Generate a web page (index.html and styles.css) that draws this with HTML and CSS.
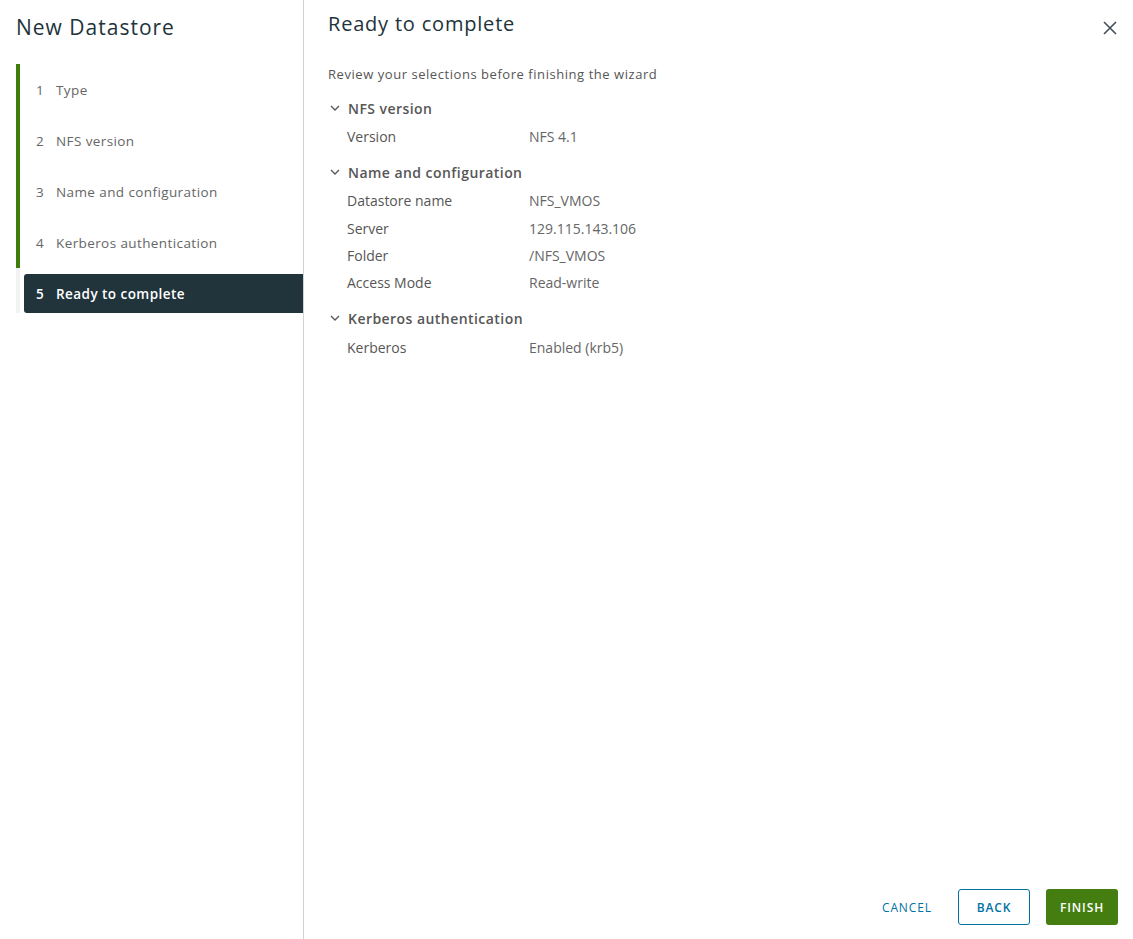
FILE: index.html
```html
<!DOCTYPE html>
<html>
<head>
<meta charset="utf-8">
<link rel="stylesheet" href="styles.css">
</head>
<body>
<div class="wizard">
  <aside class="sidebar">
    <h1 class="wiz-title">New Datastore</h1>
    <ol class="steps">
      <li class="step done"><span class="num">1</span><span>Type</span></li>
      <li class="step done"><span class="num">2</span><span>NFS version</span></li>
      <li class="step done"><span class="num">3</span><span>Name and configuration</span></li>
      <li class="step done"><span class="num">4</span><span>Kerberos authentication</span></li>
      <li class="step current"><span class="num">5</span><span>Ready to complete</span></li>
    </ol>
  </aside>
  <main class="content">
    <header class="content-head">
      <h2 class="page-title">Ready to complete</h2>
      <button class="close" aria-label="Close">
        <svg width="14" height="14" viewBox="0 0 14 14"><path d="M1 1 L13 13 M13 1 L1 13" stroke="#444f57" stroke-width="1.6" fill="none"/></svg>
      </button>
    </header>
    <p class="intro">Review your selections before finishing the wizard</p>
    <section class="group">
      <div class="group-head"><svg class="chev" width="10" height="10" viewBox="0 0 10 10"><path d="M1 3 L5 7 L9 3" stroke="#565656" stroke-width="1.3" fill="none"/></svg>NFS version</div>
      <div class="row"><span class="lbl">Version</span><span class="val">NFS 4.1</span></div>
    </section>
    <section class="group">
      <div class="group-head"><svg class="chev" width="10" height="10" viewBox="0 0 10 10"><path d="M1 3 L5 7 L9 3" stroke="#565656" stroke-width="1.3" fill="none"/></svg>Name and configuration</div>
      <div class="row"><span class="lbl">Datastore name</span><span class="val">NFS_VMOS</span></div>
      <div class="row"><span class="lbl">Server</span><span class="val">129.115.143.106</span></div>
      <div class="row"><span class="lbl">Folder</span><span class="val">/NFS_VMOS</span></div>
      <div class="row"><span class="lbl">Access Mode</span><span class="val">Read-write</span></div>
    </section>
    <section class="group">
      <div class="group-head"><svg class="chev" width="10" height="10" viewBox="0 0 10 10"><path d="M1 3 L5 7 L9 3" stroke="#565656" stroke-width="1.3" fill="none"/></svg>Kerberos authentication</div>
      <div class="row"><span class="lbl">Kerberos</span><span class="val">Enabled (krb5)</span></div>
    </section>
    <footer class="actions">
      <button class="btn btn-link">CANCEL</button>
      <button class="btn btn-outline">BACK</button>
      <button class="btn btn-success">FINISH</button>
    </footer>
  </main>
</div>
</body>
</html>
```

FILE: styles.css
```css
* { box-sizing: border-box; }
html, body { margin: 0; padding: 0; background: #fff; }
body { font-family: "Open Sans", Lato, Arial, sans-serif; color: #565656; }
.wizard { display: flex; height: 939px; width: 1133px; }
.sidebar {
  width: 304px;
  border-right: 1px solid #cbd4d8;
  flex: none;
}
.wiz-title {
  margin: 13px 0 0 16px;
  font-size: 21px;
  font-weight: 400;
  color: #21333b;
  line-height: 28px;
  letter-spacing: 1px;
}
.steps {
  list-style: none;
  margin: 23px 0 0 16px;
  padding: 0;
  border-left: 4px solid #f1f3f4;
}
.step {
  display: flex;
  align-items: center;
  height: 51px;
  font-size: 13.5px;
  color: #666;
  padding-left: 16px;
  margin-left: -4px;
  letter-spacing: 0.4px;
}
.step.done { border-left: 4px solid #3d7e0b; }
.step .num { width: 20px; }
.step.current {
  height: 39px;
  margin: 6px 0 5px 4px;
  padding-left: 12px;
  background: #21333b;
  color: #fff;
  font-weight: 600;
  border-radius: 3px 0 0 3px;
  letter-spacing: 0.45px;
}
.content {
  flex: 1;
  display: flex;
  flex-direction: column;
  padding: 0 15px 14px 24px;
}
.content-head {
  display: flex;
  justify-content: space-between;
  align-items: center;
  height: 48px;
}
.page-title {
  margin: -2px 0 0 0;
  font-size: 20px;
  font-weight: 400;
  color: #21333b;
  letter-spacing: 0.8px;
}
.close {
  border: 0;
  background: none;
  padding: 0;
  margin-top: 8px;
  margin-right: -2px;
  width: 20px;
  height: 20px;
  display: flex;
  align-items: center;
  justify-content: center;
}
.intro {
  margin: 17px 0 0 0;
  font-size: 13px;
  color: #565656;
  line-height: 18px;
  letter-spacing: 0.55px;
}
.group { margin-top: 15px; }
.group + .group { margin-top: 12px; }
.group-head {
  display: flex;
  align-items: center;
  height: 20px;
  font-size: 14px;
  font-weight: 600;
  color: #565656;
  padding-left: 2px;
  letter-spacing: 0.45px;
}
.chev { margin-right: 8px; }
.row {
  display: flex;
  height: 27.3px;
  align-items: center;
  font-size: 14px;
  padding-left: 19px;
}
.group-head + .row { margin-top: 5px; }
.lbl { width: 182px; color: #565656; }
.val { color: #666; }
.actions {
  margin-top: auto;
  display: flex;
  justify-content: flex-end;
  align-items: center;
  gap: 16px;
}
.btn {
  height: 36px;
  font-family: inherit;
  font-size: 12px;
  font-weight: 600;
  letter-spacing: 0.9px;
  border-radius: 3px;
  padding: 0 12px;
  cursor: pointer;
}
.btn-link { border: 0; background: none; color: #0072a3; font-weight: 500; margin-right: -2px; }
.btn-outline { border: 1px solid #0072a3; background: #fff; color: #0072a3; width: 72px; }
.btn-success { border: 0; background: #457e10; color: #fff; width: 72px; }
```
